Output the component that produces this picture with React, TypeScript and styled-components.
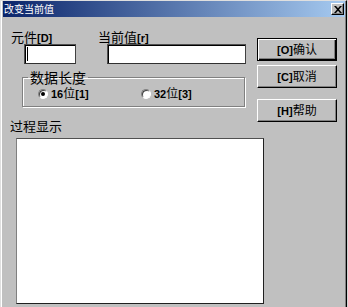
import styled, { createGlobalStyle } from "styled-components";

const GlobalStyle = createGlobalStyle`
  body {
    margin: 0;
    background: #d6d6d6;
  }
`;

const cjk = `"Noto Sans CJK SC", "Noto Sans", sans-serif`;

const App = (): JSX.Element => {
  return (
    <>
      <GlobalStyle />
      <Window>
        <TitleBar>
          <TitleText>改变当前值</TitleText>
          <CloseButton aria-label='关闭'>
            <svg width='8' height='7' viewBox='0 0 8 7'>
              <path d='M0 0h2l2 2.2L6 0h2L5 3.5 8 7H6L4 4.8 2 7H0l3-3.5z' fill='#000' />
            </svg>
          </CloseButton>
        </TitleBar>
        <Body>
          <LeftArea>
            <FieldRow>
              <Field $width={88}>
                <Label $indent={1}>
                  元件<Key>[D]</Key>
                </Label>
                <InputBox $indent={14} $width={52}>
                  <Caret />
                </InputBox>
              </Field>
              <Field $width={148}>
                <Label $indent={0}>
                  当前值<Key>[r]</Key>
                </Label>
                <InputBox $indent={9} $width={139} />
              </Field>
            </FieldRow>
            <GroupBox>
              <Legend>数据长度</Legend>
              <RadioRow>
                <RadioItem>
                  <RadioDot $checked />
                  <RadioText>
                    <Key>16</Key>位<Key>[1]</Key>
                  </RadioText>
                </RadioItem>
                <RadioItem>
                  <RadioDot />
                  <RadioText>
                    <Key>32</Key>位<Key>[3]</Key>
                  </RadioText>
                </RadioItem>
              </RadioRow>
            </GroupBox>
            <ProcessLabel>过程显示</ProcessLabel>
          </LeftArea>
          <ButtonStack>
            <Button $default>
              <Key>[O]</Key>确认
            </Button>
            <Button $gap={4}>
              <Key>[C]</Key>取消
            </Button>
            <Button $gap={11}>
              <Key>[H]</Key>帮助
            </Button>
          </ButtonStack>
          <ListBox />
        </Body>
      </Window>
    </>
  );
};

const Window = styled.div`
  box-sizing: border-box;
  width: 347px;
  height: 307px;
  background: #c0c0c0;
  border-top: 1px solid #dfdfdf;
  border-left: 1px solid #dfdfdf;
  border-right: 1px solid #000;
  padding: 0 1px 0 2px;
  box-shadow: inset 1px 0 0 #fff, inset -1px 0 0 #808080;
  overflow: hidden;
`;

const TitleBar = styled.div`
  display: flex;
  align-items: center;
  justify-content: space-between;
  height: 16px;
  padding: 0 1px 0 1px;
  background: linear-gradient(to right, #0a246a, #a6caf0);
`;

const TitleText = styled.span`
  font-family: ${cjk};
  font-size: 10px;
  line-height: 12px;
  color: #fff;
`;

const CloseButton = styled.button`
  box-sizing: border-box;
  width: 13px;
  height: 12px;
  padding: 0;
  display: flex;
  align-items: center;
  justify-content: center;
  background: #c0c0c0;
  border: 1px solid;
  border-color: #fff #000 #000 #fff;
  box-shadow: inset -1px -1px 0 #808080;
`;

const Body = styled.div`
  display: grid;
  grid-template-columns: 247px 80px;
  padding-left: 7px;
`;

const LeftArea = styled.div`
  padding-top: 13px;
`;

const FieldRow = styled.div`
  display: flex;
`;

const Field = styled.div<{ $width: number }>`
  width: ${(p) => p.$width}px;
  display: flex;
  flex-direction: column;
`;

const Label = styled.div<{ $indent: number }>`
  padding-left: ${(p) => p.$indent}px;
  font-family: ${cjk};
  font-size: 13px;
  line-height: 13px;
  height: 13px;
  margin-bottom: 1px;
  color: #000;
  white-space: nowrap;
`;

const Key = styled.span`
  font-family: "Liberation Sans", Arial, sans-serif;
  font-size: 11px;
  font-weight: bold;
`;

const InputBox = styled.div<{ $indent: number; $width: number }>`
  box-sizing: border-box;
  margin-left: ${(p) => p.$indent}px;
  width: ${(p) => p.$width}px;
  height: 20px;
  background: #fff;
  border: 1px solid;
  border-color: #505050 #404040 #303030 #505050;
  box-shadow: inset 1px 1px 0 #000;
  padding: 2px 0 0 2px;
`;

const Caret = styled.div`
  width: 1px;
  height: 14px;
  background: #000;
`;

const GroupBox = styled.fieldset`
  box-sizing: border-box;
  margin: 6px 0 0 12px;
  width: 223px;
  height: 37px;
  min-width: 0;
  padding: 2px 0 0 15px;
  border: 1px solid #808080;
  box-shadow: inset 1px 1px 0 #fff, 1px 1px 0 #fff;
`;

const Legend = styled.legend`
  margin-left: -10px;
  padding: 0 2px;
  font-family: ${cjk};
  font-size: 14px;
  line-height: 14px;
  color: #000;
`;

const RadioRow = styled.div`
  display: flex;
`;

const RadioItem = styled.label`
  width: 110px;
  display: flex;
  align-items: center;
  gap: 3px;
`;

const RadioText = styled.span`
  font-family: ${cjk};
  font-size: 12px;
  line-height: 14px;
  color: #000;
  white-space: nowrap;
`;

const RadioDot = styled.span<{ $checked?: boolean }>`
  position: relative;
  box-sizing: border-box;
  width: 10px;
  height: 10px;
  border-radius: 50%;
  background: #fff;
  border: 1px solid;
  border-color: #808080 #fff #fff #808080;
  box-shadow: inset 1px 1px 0 #404040;

  &::after {
    content: "";
    display: ${(p) => (p.$checked ? "block" : "none")};
    position: absolute;
    left: 2px;
    top: 2px;
    width: 4px;
    height: 4px;
    border-radius: 50%;
    background: #000;
  }
`;

const ProcessLabel = styled.div`
  margin-top: 12px;
  font-family: ${cjk};
  font-size: 13px;
  line-height: 14px;
  color: #000;
`;

const ButtonStack = styled.div`
  display: flex;
  flex-direction: column;
  margin-top: 21px;
`;

const Button = styled.button<{ $default?: boolean; $gap?: number }>`
  box-sizing: border-box;
  width: 80px;
  height: 23px;
  margin-top: ${(p) => p.$gap ?? 0}px;
  padding: 0;
  background: #c0c0c0;
  font-family: ${cjk};
  font-size: 12px;
  line-height: 14px;
  color: #000;
  border: 1px solid;
  border-color: ${(p) => (p.$default ? "#000" : "#fff #000 #000 #fff")};
  box-shadow: ${(p) =>
    p.$default
      ? "inset 1px 1px 0 #fff, inset -1px -1px 0 #000, inset -2px -2px 0 #808080"
      : "inset -1px -1px 0 #808080"};
`;

const ListBox = styled.div`
  grid-column: 1 / -1;
  box-sizing: border-box;
  margin: 5px 0 0 6px;
  width: 248px;
  height: 166px;
  background: #fff;
  border: 1px solid;
  border-color: #505050 #202020 #202020 #808080;
`;

export default App;
